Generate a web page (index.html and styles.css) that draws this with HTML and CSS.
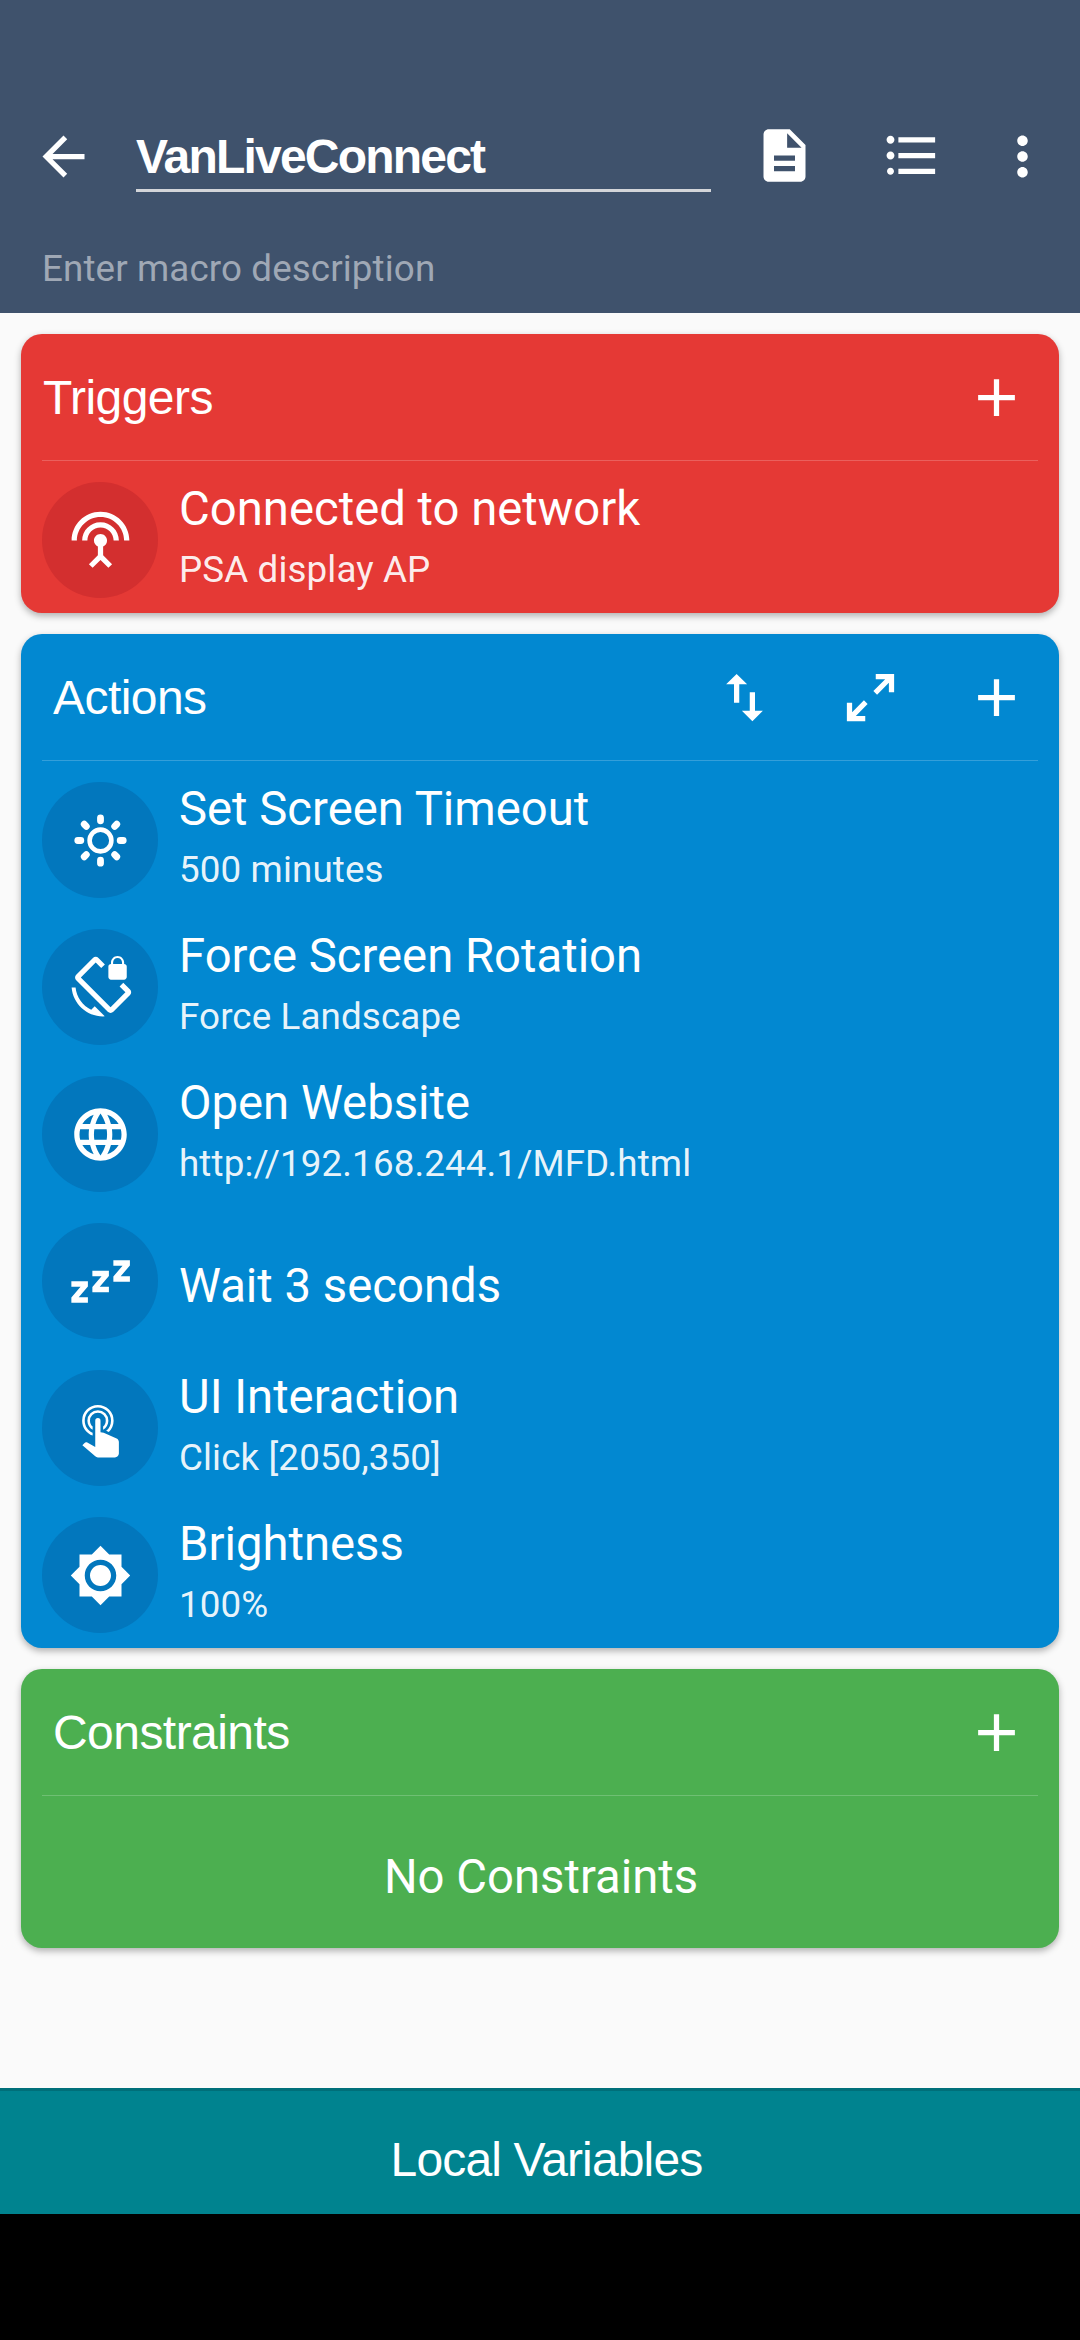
FILE: index.html
```html
<!DOCTYPE html>
<html lang="en">
<head>
<meta charset="utf-8">
<title>VanLiveConnect</title>
<link rel="stylesheet" href="styles.css">
</head>
<body>
<div class="screen">
  <header class="toolbar">
    <div class="toolbar-row">
      <svg class="icon back" viewBox="0 0 24 24"><path d="M20 11H7.83l5.59-5.59L12 4l-8 8 8 8 1.41-1.41L7.83 13H20v-2z"/></svg>
      <div class="name-field"><span class="name">VanLiveConnect</span></div>
      <svg class="icon notes" viewBox="0 0 24 24"><path d="M14 2H6c-1.1 0-1.99.9-1.99 2L4 20c0 1.1.89 2 1.99 2H18c1.1 0 2-.9 2-2V8l-6-6zm2 16H8v-2h8v2zm0-4H8v-2h8v2zm-3-5V3.5L18.5 9H13z"/></svg>
      <svg class="icon list" viewBox="0 0 24 24"><path d="M4 10.5c-.83 0-1.5.67-1.5 1.5s.67 1.5 1.5 1.5 1.5-.67 1.5-1.5-.67-1.5-1.5-1.5zm0-6c-.83 0-1.5.67-1.5 1.5S3.17 7.5 4 7.5 5.5 6.83 5.5 6 4.83 4.5 4 4.5zm0 12.17c-.74 0-1.33.6-1.33 1.33s.6 1.33 1.33 1.33 1.33-.6 1.33-1.33-.59-1.33-1.33-1.33zM7 19h14v-2H7v2zm0-6h14v-2H7v2zm0-8v2h14V5H7z"/></svg>
      <svg class="icon more" viewBox="0 0 24 24"><path d="M12 8c1.1 0 2-.9 2-2s-.9-2-2-2-2 .9-2 2 .9 2 2 2zm0 2c-1.1 0-2 .9-2 2s.9 2 2 2 2-.9 2-2-.9-2-2-2zm0 6c-1.1 0-2 .9-2 2s.9 2 2 2 2-.9 2-2-.9-2-2-2z"/></svg>
    </div>
    <div class="description">Enter macro description</div>
  </header>

  <main class="cards">
    <section class="card triggers">
      <div class="card-head">
        <h2 class="card-title">Triggers</h2>
        <svg class="icon" viewBox="0 0 24 24"><path d="M19 13h-6v6h-2v-6H5v-2h6V5h2v6h6v2z"/></svg>
      </div>
      <div class="rows">
        <div class="row">
          <div class="badge"><svg class="icon" viewBox="0 0 24 24"><path d="M12 5c-3.87 0-7 3.13-7 7h2c0-2.76 2.24-5 5-5s5 2.24 5 5h2c0-3.87-3.13-7-7-7zm1 9.29c.88-.39 1.5-1.26 1.5-2.29 0-1.38-1.12-2.5-2.5-2.5S9.5 10.62 9.5 12c0 1.02.62 1.9 1.5 2.29v3.3L7.59 21 9 22.41l3-3 3 3L16.41 21 13 17.59v-3.3zM12 1C5.93 1 1 5.93 1 12h2c0-4.97 4.03-9 9-9s9 4.03 9 9h2c0-6.07-4.93-11-11-11z"/></svg></div>
          <div class="texts"><div class="row-title">Connected to network</div><div class="row-sub">PSA display AP</div></div>
        </div>
      </div>
    </section>

    <section class="card actions">
      <div class="card-head">
        <h2 class="card-title inset">Actions</h2>
        <svg class="icon" viewBox="0 0 24 24"><path d="M9 3L5 6.99h3V14h2V6.99h3L9 3zm7 14.01V10h-2v7.01h-3L15 21l4-3.99h-3z"/></svg>
        <svg class="icon" viewBox="0 0 24 24"><path d="M10 21V19H6.41L10.91 14.5L9.5 13.09L5 17.59V14H3V21H10M14.5 10.91L19 6.41V10H21V3H14V5H17.59L13.09 9.5L14.5 10.91Z"/></svg>
        <svg class="icon" viewBox="0 0 24 24"><path d="M19 13h-6v6h-2v-6H5v-2h6V5h2v6h6v2z"/></svg>
      </div>
      <div class="rows">
        <div class="row">
          <div class="badge"><svg class="icon" viewBox="0 0 24 24"><g fill="none" stroke="#fff"><circle cx="12" cy="12" r="4.15" stroke-width="1.75"/><path stroke-width="2.6" stroke-linecap="round" d="M12 4.5V3.35M12 19.5v1.15M4.5 12H3.35M19.5 12h1.15M6.6 6.6l-.8-.8M17.4 6.6l.8-.8M6.6 17.4l-.8.8M17.4 17.4l.8.8"/></g></svg></div>
          <div class="texts"><div class="row-title">Set Screen Timeout</div><div class="row-sub">500 minutes</div></div>
        </div>
        <div class="row">
          <div class="badge"><svg class="icon" viewBox="0 0 24 24"><path d="M23.25 12.77l-2.57-2.57-1.41 1.41 2.22 2.22-5.66 5.66L4.51 8.17l5.66-5.66 2.1 2.1 1.41-1.41L11.23.75c-.59-.59-1.54-.59-2.12 0L2.75 7.11c-.59.59-.59 1.54 0 2.12l12.02 12.02c.59.59 1.54.59 2.12 0l6.36-6.36c.59-.59.59-1.54 0-2.12zM8.47 20.48C5.2 18.94 2.86 15.76 2.5 12H1c.51 6.16 5.66 11 11.95 11l.66-.03-3.81-3.82-1.33 1.33zM16 9h5c.55 0 1-.45 1-1V4c0-.55-.45-1-1-1v-.5C21 1.12 19.88 0 18.5 0S16 1.12 16 2.5V3c-.55 0-1 .45-1 1v4c0 .55.45 1 1 1zm.8-6.5c0-.94.76-1.7 1.7-1.7s1.7.76 1.7 1.7V3h-3.4v-.5z"/></svg></div>
          <div class="texts"><div class="row-title">Force Screen Rotation</div><div class="row-sub">Force Landscape</div></div>
        </div>
        <div class="row">
          <div class="badge"><svg class="icon" viewBox="0 0 24 24"><path d="M11.99 2C6.47 2 2 6.48 2 12s4.47 10 9.99 10C17.52 22 22 17.52 22 12S17.52 2 11.99 2zm6.93 6h-2.95c-.32-1.25-.78-2.45-1.38-3.56 1.84.63 3.37 1.91 4.33 3.56zM12 4.04c.83 1.2 1.48 2.53 1.91 3.96h-3.82c.43-1.43 1.08-2.76 1.91-3.96zM4.26 14C4.1 13.36 4 12.69 4 12s.1-1.36.26-2h3.38c-.08.66-.14 1.32-.14 2 0 .68.06 1.34.14 2H4.26zm.82 2h2.95c.32 1.25.78 2.45 1.38 3.56-1.84-.63-3.37-1.9-4.33-3.56zm2.95-8H5.08c.96-1.66 2.49-2.93 4.33-3.56C8.81 5.55 8.35 6.75 8.03 8zM12 19.96c-.83-1.2-1.48-2.53-1.91-3.96h3.82c-.43 1.43-1.08 2.76-1.91 3.96zM14.34 14H9.66c-.09-.66-.16-1.32-.16-2 0-.68.07-1.35.16-2h4.68c.09.65.16 1.32.16 2 0 .68-.07 1.34-.16 2zm.25 5.56c.6-1.11 1.06-2.31 1.38-3.56h2.95c-.96 1.65-2.49 2.93-4.33 3.56zM16.36 14c.08-.66.14-1.32.14-2 0-.68-.06-1.34-.14-2h3.38c.16.64.26 1.31.26 2s-.1 1.36-.26 2h-3.38z"/></svg></div>
          <div class="texts"><div class="row-title">Open Website</div><div class="row-sub">http://192.168.244.1/MFD.html</div></div>
        </div>
        <div class="row">
          <div class="badge"><svg class="icon" viewBox="0 0 24 24"><path d="M.9 11.9h6.3v2L3.7 18h3.5v2.1H.9v-2L4.4 14H.9zM8.9 7.9h6.3v2L11.7 14h3.5v2.1H8.9v-2l3.5-4.1H8.9zM16.9 3.9h6.3v2L19.7 10h3.5v2.1h-6.3v-2L20.4 6h-3.5z"/></svg></div>
          <div class="texts single"><div class="row-title">Wait 3 seconds</div></div>
        </div>
        <div class="row">
          <div class="badge"><svg class="icon" viewBox="0 0 24 24"><path d="M10,9A1,1 0 0,1 11,8A1,1 0 0,1 12,9V13.47L13.21,13.6L18.15,15.79C18.68,16.03 19,16.56 19,17.14V21.5C18.97,22.32 18.32,22.97 17.5,23H11C10.62,23 10.26,22.85 10,22.57L5.1,18.37L5.84,17.6C6.03,17.39 6.3,17.28 6.58,17.28H6.8L10,19V9M11,5A4,4 0 0,1 15,9C15,10.5 14.2,11.77 13,12.46V11.24C13.61,10.69 14,9.89 14,9A3,3 0 0,0 11,6A3,3 0 0,0 8,9C8,9.89 8.39,10.69 9,11.24V12.46C7.8,11.77 7,10.5 7,9A4,4 0 0,1 11,5M11,3A6,6 0 0,1 17,9C17,10.7 16.29,12.23 15.16,13.33L14.16,12.88C15.28,11.96 16,10.56 16,9A5,5 0 0,0 11,4A5,5 0 0,0 6,9C6,11.05 7.23,12.81 9,13.58V14.67C6.67,13.83 5,11.61 5,9A6,6 0 0,1 11,3Z"/></svg></div>
          <div class="texts"><div class="row-title">UI Interaction</div><div class="row-sub">Click [2050,350]</div></div>
        </div>
        <div class="row">
          <div class="badge"><svg class="icon" viewBox="0 0 24 24"><path d="M20 8.69V4h-4.69L12 .69 8.69 4H4v4.69L.69 12 4 15.31V20h4.69L12 23.31 15.31 20H20v-4.69L23.31 12 20 8.69zM12 18c-3.31 0-6-2.69-6-6s2.69-6 6-6 6 2.69 6 6-2.69 6-6 6zm0-10c-2.21 0-4 1.79-4 4s1.79 4 4 4 4-1.79 4-4-1.79-4-4-4z"/></svg></div>
          <div class="texts"><div class="row-title">Brightness</div><div class="row-sub">100%</div></div>
        </div>
      </div>
    </section>

    <section class="card constraints">
      <div class="card-head">
        <h2 class="card-title inset">Constraints</h2>
        <svg class="icon" viewBox="0 0 24 24"><path d="M19 13h-6v6h-2v-6H5v-2h6V5h2v6h6v2z"/></svg>
      </div>
      <div class="empty">No Constraints</div>
    </section>
  </main>

  <footer class="variables">Local Variables</footer>
  <div class="nav-area"></div>
</div>
</body>
</html>
```
FILE: styles.css
```css
* {
  box-sizing: border-box;
}

body {
  margin: 0;
  background: #fafafa;
  color: #fff;
  font-family: Roboto, sans-serif;
}

.screen {
  display: flex;
  flex-direction: column;
  width: 1080px;
  height: 2340px;
  overflow: hidden;
}

.icon {
  display: block;
  flex: none;
  width: 63px;
  height: 63px;
  fill: #fff;
}

/* Toolbar */
.toolbar {
  flex: none;
  height: 313px;
  padding-top: 83px;
  background: #3f526c;
}

.toolbar-row {
  display: flex;
  align-items: center;
  height: 147px;
  padding: 0 26px 0 32px;
}

.name-field {
  display: flex;
  align-items: flex-end;
  width: 575px;
  height: 66px;
  margin: 4px 42px 0 41px;
  border-bottom: 3px solid #d3d5d9;
}

.name {
  font: bold 48px/56px "Liberation Sans", Arial, sans-serif;
  letter-spacing: -1.8px;
  padding-bottom: 4px;
}

.notes,
.list {
  margin-top: -2px;
}

.list {
  margin-left: 64px;
}

.more {
  margin-left: 48px;
}

.description {
  padding-left: 42px;
  font-size: 36.75px;
  line-height: 78px;
  letter-spacing: 0.12px;
  color: #9fa8b5;
}

/* Cards */
.cards {
  display: flex;
  flex: 1;
  flex-direction: column;
  gap: 21px;
  padding: 21px;
}

.card {
  flex: none;
  padding: 0 21px 15px;
  border-radius: 21px;
  box-shadow: 0 3px 7px rgba(0, 0, 0, 0.3);
}

.triggers {
  background: #e53935;
}

.actions {
  background: #0288d1;
}

.constraints {
  height: 279px;
  background: #4caf50;
}

.card-head {
  display: flex;
  align-items: center;
  gap: 63px;
  height: 127px;
  padding-right: 10px;
  border-bottom: 1px solid rgba(255, 255, 255, 0.2);
}

.card-title {
  flex: 1;
  margin: 0;
  padding: 2px 0 0 1px;
  font: 400 48px/56px "Liberation Sans", Arial, sans-serif;
  letter-spacing: -0.55px;
}

.card-title.inset {
  padding-left: 11px;
}

.rows {
  display: flex;
  flex-direction: column;
  gap: 31px;
  padding-top: 21px;
}

.row {
  display: flex;
  gap: 21px;
  height: 116px;
}

.badge {
  display: flex;
  align-items: center;
  justify-content: center;
  width: 116px;
  height: 116px;
  padding: 1px 0 0 1px;
  border-radius: 50%;
}

.triggers .badge {
  background: #d32f2f;
}

.actions .badge {
  background: #0277bd;
}

.row-title {
  font-size: 47.25px;
  line-height: 54px;
}

.row-sub {
  margin-top: 11px;
  font-size: 36.75px;
  line-height: 46px;
  letter-spacing: 0.12px;
  color: rgba(255, 255, 255, 0.93);
}

.single {
  padding-top: 36px;
}

.empty {
  padding: 54px 0 0 2px;
  font-size: 47.25px;
  line-height: 54px;
  text-align: center;
}

/* Bottom bar */
.variables {
  flex: none;
  height: 126px;
  padding-left: 13px;
  border-top: 3px solid #006f79;
  background: #00838f;
  font: 400 48px/137px "Liberation Sans", Arial, sans-serif;
  letter-spacing: -0.85px;
  text-align: center;
}

.nav-area {
  flex: none;
  height: 126px;
  background: #000;
}
```
